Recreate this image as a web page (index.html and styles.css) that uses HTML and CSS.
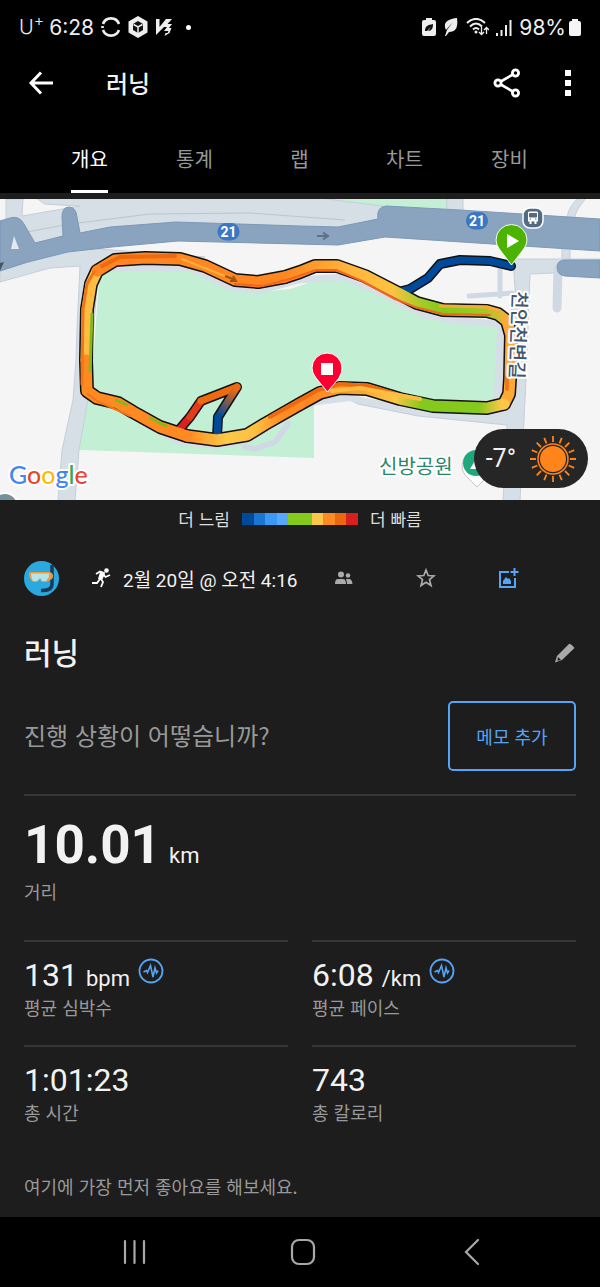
FILE: index.html
```
<!DOCTYPE html>
<html lang="ko">
<head>
    <meta charset="UTF-8">
    <meta name="viewport" content="width=device-width, initial-scale=1.0">
    <title>러닝</title>
    <link rel="stylesheet" href="styles.css">
</head>
<body>
    <header class="top">
        <div class="status-bar">
            <div class="status-left">
                <span class="carrier">U<sup>+</sup></span>
                <span>6:28</span>
                <svg width="20" height="20" viewBox="0 0 20 20"><path d="M2 7A8.500 8.500 0 0 1 18 7M2 13A8.500 8.500 0 0 0 18 13M1.500 11V9" fill="none" stroke="#eee" stroke-width="2.600"/></svg>
                <svg width="20" height="22" viewBox="0 0 20 22"><path d="M10 0l9.500 5.500v11L10 22 .5 16.500v-11z" fill="#eee"/><path d="M10 5l5 3v6l-5 3-5-3V8z" fill="#111"/><path d="M5.500 8.500L10 11l4.500-2.500M10 11v6" fill="none" stroke="#eee" stroke-width="1.500"/></svg>
                <svg width="18" height="18" viewBox="0 0 18 18"><path d="M1 1h3.500v8L11 1h6l-4.500 5H17l-3 4h2.500L14.500 15 9.500 18l1-3h2l1-2H9l3-4H9L1 17z" fill="#eee"/></svg>
                <span class="dot"></span>
            </div>
            <div class="status-right">
                <svg width="14" height="18" viewBox="0 0 14 18"><path d="M4 0h6v2h2a2 2 0 0 1 2 2v12a2 2 0 0 1-2 2H2a2 2 0 0 1-2-2V4a2 2 0 0 1 2-2h2z" fill="#eee"/><path d="M3 13c0-5 3-6 8-7 0 4-1 7-5 7l3-4-4 4z" fill="#111"/></svg>
                <svg width="16" height="18" viewBox="0 0 16 18"><path d="M14 0c1 8 0 14-8 14l-3 4H2l2-6 6-8-7 8C-1 4 6 1 14 0z" fill="#eee"/></svg>
                <svg width="23" height="18" viewBox="0 0 23 18"><path d="M1 5C6-.5 14-.5 19 5M4 8.500c4-4 8-4 12 0M7 11.500c2-2 4-2 6 0" fill="none" stroke="#eee" stroke-width="2"/><circle cx="10" cy="14" r="1.500" fill="#eee"/><path d="M15.500 9v7m-2.500-2l2.500 2.500L18 14M20.500 16v-6M18 12l2.500-2.500L23 12" fill="none" stroke="#eee" stroke-width="1.300"/></svg>
                <svg width="16" height="17" viewBox="0 0 16 17"><path d="M1 14v3M5.500 11v6M10 6v11M14.500 1v16" stroke="#eee" stroke-width="2"/></svg>
                <span class="battery-level">98%</span>
                <svg width="12" height="17" viewBox="0 0 12 17"><path d="M3 0h6v2h1a2 2 0 0 1 2 2v11a2 2 0 0 1-2 2H2a2 2 0 0 1-2-2V4a2 2 0 0 1 2-2h1z" fill="#f5f5f5"/></svg>
            </div>
        </div>

        <div class="app-bar">
            <button class="icon-btn" aria-label="뒤로">
                <svg width="26" height="24" viewBox="0 0 26 24"><path d="M13 1.500L3 12l10 10.500M3 12h22" fill="none" stroke="#fff" stroke-width="3"/></svg>
            </button>
            <h1>러닝</h1>
            <button class="icon-btn share" aria-label="공유">
                <svg width="28" height="30" viewBox="0 0 28 30"><path d="M5 15L22.500 5M5 15l17.500 10" stroke="#fff" stroke-width="2.600"/><g fill="#000" stroke="#fff" stroke-width="2.800"><circle cx="5" cy="15" r="3.100"/><circle cx="22.500" cy="5" r="3.100"/><circle cx="22.500" cy="25" r="3.100"/></g></svg>
            </button>
            <button class="icon-btn" aria-label="더보기">
                <svg width="6" height="28" viewBox="0 0 6 28"><path d="M0 1h6v6H0zM0 11h6v6H0zM0 21h6v6H0z" fill="#fff"/></svg>
            </button>
        </div>

        <nav class="tabs">
            <button class="tab active"><span>개요</span></button>
            <button class="tab"><span>통계</span></button>
            <button class="tab"><span>랩</span></button>
            <button class="tab"><span>차트</span></button>
            <button class="tab"><span>장비</span></button>
        </nav>
    </header>

    <main>
        <section class="map">
            <svg class="map-canvas" viewBox="0 0 600 301" role="img" aria-label="러닝 경로">
                <defs>
                    <linearGradient id="spur" gradientUnits="userSpaceOnUse" x1="238" y1="188" x2="219" y2="217">
                        <stop offset="0.100" stop-color="#ee6a10"/><stop offset="1" stop-color="#004a9c"/>
                    </linearGradient>
                    <linearGradient id="south" gradientUnits="userSpaceOnUse" x1="187" y1="0" x2="300" y2="0">
                        <stop offset="0" stop-color="#ff8a22"/><stop offset="0.350" stop-color="#fdc847"/><stop offset="0.600" stop-color="#fdc040"/><stop offset="0.850" stop-color="#ff8a22"/>
                    </linearGradient>
                    <linearGradient id="southeast" gradientUnits="userSpaceOnUse" x1="300" y1="0" x2="510" y2="0">
                        <stop offset="0" stop-color="#f98120"/><stop offset="0.300" stop-color="#fca631"/><stop offset="0.450" stop-color="#fcc746"/><stop offset="0.580" stop-color="#84c91b"/><stop offset="0.850" stop-color="#84c91b"/><stop offset="0.960" stop-color="#fcc746"/>
                    </linearGradient>
                    <linearGradient id="north" gradientUnits="userSpaceOnUse" x1="285" y1="0" x2="510" y2="0">
                        <stop offset="0" stop-color="#ff8620"/><stop offset="0.300" stop-color="#ffb73c"/><stop offset="0.480" stop-color="#fcc23f"/><stop offset="0.600" stop-color="#a6cc29"/><stop offset="0.700" stop-color="#84c91b"/><stop offset="0.880" stop-color="#9ccb25"/><stop offset="1" stop-color="#fdae38"/>
                    </linearGradient>
                </defs>
                <rect width="600" height="301" fill="#f5f5f5"/>

                <!-- parks -->
                <path d="M100 68L145 70 190 71 215 82 250 94 290 90 320 80 353 79 400 98 430 114 460 125 498 127 496 201 430 202 360 190 314 207V259L79 251 88 200 94 150z" fill="#c3f0d4"/>
                <path d="M320 0H447V11L383 7z" fill="#c3f0d4"/>

                <!-- side roads -->
                <g fill="#d6dee6" stroke="#c5cfda" stroke-width="1">
                    <path d="M6 0H23L22 17 80 7 60 6 45 5 36 -1H320L350 3 383 7 378 20 338 30 176 26 110 32 35 48 0 42V22H6z"/>
                    <path d="M0 83L50 69 80 67 77 130 76 161 73 201 62 251 58 302H75L79 251 88 200 98 75 118 56 205 58 100 50 68 50 0 70z"/>
                    <path d="M447 -1H463V16H446z"/>
                    <path d="M503 302L507 226 418 217 358 205 350 201 495 208 500 125 516 105 513 60 600 60V72L530 75 526 180 520 302z"/>
                    <path d="M578 -1C570 8 567 12 567 24H574C574 12 582 5 586 -1zM562 47H570V60H562z"/>
                </g>
                <path d="M0 38L70 25 150 15 250 14 345 21" fill="none" stroke="#b9c6cf"/>
                <g fill="none" stroke="#d6dee6" stroke-linecap="round" stroke-linejoin="round">
                    <path d="M98 69L190 69 230 88 257 92 298 81 345 78 385 96 425 116 460 122 501 125 497 201" stroke-width="7"/>
                    <path d="M95 194L118 199 138 221 180 243 215 247 245 243 280 222 310 204 350 199 420 212 490 216" stroke-width="6"/>
                    <path d="M245 248L255 250 275 243 288 225" stroke="#d0d9e3" stroke-width="6"/>
                    <path d="M500 66V97M469 97L512 94" stroke="#cfd9e3" stroke-width="5"/>
                    <path d="M558 70L557 109" stroke="#cfd9e3" stroke-width="9"/>
                </g>

                <!-- highway 21 -->
                <path d="M0 22L10 19Q19 16 24 25L35 44 63 37 62 18Q62 8 69 8 76 8 77 18L80 34 110 28 176 23 300 27 338 28 378 20Q376 8 386 7L460 11 600 20V52L385 38 338 46 178 42 112 48 68 53 28 63 0 72z" fill="#8aa3bf" stroke="#7c99b8"/>
                <path d="M11 50L14 37 19 50z" fill="#e3e9ed"/>
                <path d="M600 61H564Q557 62 557 68 557 76 565 77L600 79z" fill="#8aa3bf" stroke="#7c99b8"/>
                <path d="M0 64L4 63 0 72z" fill="#465563"/>
                <path d="M317 37H327M323 33.500L328 37 323 40.500" fill="none" stroke="#5e7287" stroke-width="2"/>
                <g class="road-sign">
                    <rect x="217.500" y="24" width="22" height="17.500" rx="8.500" fill="#3a77c5"/>
                    <text x="228.500" y="38" text-anchor="middle">21</text>
                    <rect x="466" y="13" width="22" height="17.500" rx="8.500" fill="#3a77c5"/>
                    <text x="477" y="27" text-anchor="middle">21</text>
                </g>
                <g>
                    <rect x="523" y="9" width="20" height="20" rx="7" fill="#536b80" stroke="#fff" stroke-width="1.500"/>
                    <path d="M529 12.500H537Q538 12.500 538 14V22.500H536.500V25H534.500V22.500H531.500V25H529.500V22.500H528V14Q528 12.500 529 12.500z" fill="#fff"/>
                    <path d="M529.500 14.500H536.500V18H529.500zM529.500 20H531M535 20H536.500" fill="#536b80" stroke="#536b80"/>
                </g>

                <!-- track outline -->
                <g fill="none" stroke="#111" stroke-linecap="round" stroke-linejoin="round">
                    <path d="M511 67L490 62 460 61 440 65 428 79 410 90 402 92M178 232L190 218 201 202 237 188 218 218 217 238" stroke-width="10"/>
                    <path d="M86 161L87 110 91 85 97 72 115 61 145 59 180 60 205 67 235 81 258 83 285 78 300 73 315 67 337 67 365 77 400 95 417 104 443 111 487 112 498 115 507 122 511 136 510 180 509 195 504 205 487 209 433 207 400 200 367 190 340 189 320 194 300 205 265 225 247 236 217 241 187 237 160 228 133 213 118 204 97 199 87 192z" stroke-width="14"/>
                </g>
                <!-- track, coloured by pace -->
                <g fill="none" stroke-linecap="round" stroke-linejoin="round">
                    <path d="M511 67L490 62 460 61 440 65 428 79 410 90 402 92" stroke="#004a9c" stroke-width="7"/>
                    <path d="M178 232L190 218" stroke="#d8201e" stroke-width="7"/>
                    <path d="M190 218L201 202" stroke="#e33b1b" stroke-width="7"/>
                    <path d="M201 202L237 188" stroke="#ee6a10" stroke-width="7"/>
                    <path d="M237 188L218 218" stroke="url(#spur)" stroke-width="7"/>
                    <path d="M218 218L217 238" stroke="#004a9c" stroke-width="7"/>
                    <path d="M86 161L87 110 91 85 97 72" stroke="#fdbd43" stroke-width="11"/>
                    <path d="M97 72L115 61 145 59 180 60 205 67 235 81 258 83 285 78" stroke="#ff8620" stroke-width="11"/>
                    <path d="M285 78L300 73 315 67 337 67 365 77 400 95 417 104 443 111 487 112 498 115 507 122" stroke="url(#north)" stroke-width="11"/>
                    <path d="M507 122L511 136 510 180 509 195 504 205" stroke="#fda936" stroke-width="11"/>
                    <path d="M504 205L487 209 433 207 400 200 367 190 340 189 320 194 300 205" stroke="url(#southeast)" stroke-width="11"/>
                    <path d="M300 205L265 225 247 236 217 241 187 237" stroke="url(#south)" stroke-width="11"/>
                    <path d="M187 237L160 228 133 213 118 204 97 199 87 192 86 161" stroke="#ff8a22" stroke-width="11"/>
                    <!-- second lap -->
                    <path d="M82 185L83 110 87 85 94 73" stroke="#f27618" stroke-width="3"/>
                    <path d="M90 172L92 115" stroke="#84b91b" stroke-width="3"/>
                    <path d="M102 67L120 58 175 57" stroke="#ee6a10" stroke-width="4"/>
                    <path d="M182 60L230 79" stroke="#fdb13c" stroke-width="2"/>
                    <path d="M235 85L262 87 290 80 316 71 336 71 362 82 395 100 415 108 443 115 490 116" stroke="#f1661c" stroke-width="2"/>
                    <path d="M440 107L487 108 500 112" stroke="#fba834" stroke-width="3"/>
                    <path d="M270 218L318 191 340 185 368 187 395 195" stroke="#ee6a10" stroke-width="4"/>
                    <path d="M332 192L360 189 420 200" stroke="#fdbd43" stroke-width="4"/>
                    <path d="M88 195L97 202 130 217" stroke="#f27618" stroke-width="2"/>
                    <path d="M116 201L127 206M150 219L166 227" stroke="#84b91b" stroke-width="3"/>
                    <path d="M507 178V190" stroke="#f27618" stroke-width="4"/>
                </g>
                <path d="M225 77L235 81M230 82L236 82 233 77" fill="none" stroke="#9a5512" stroke-width="2"/>

                <!-- start and finish pins -->
                <path d="M511.500 66L500 51Q496 46 496 41A15.500 15.500 0 0 1 527 41Q527 46 523 51z" fill="#4cb400" stroke="#f5fff0"/>
                <path d="M507 35L519 42 507 49z" fill="#fff"/>
                <path d="M327.500 193L316 179Q312 174 312 169A15 15 0 0 1 342 169Q342 174 339 179z" fill="#fb0030" stroke="#fff"/>
                <rect x="321" y="164" width="12" height="12" fill="#fff"/>

                <text class="street" transform="translate(513 92) rotate(92)">천안천변길</text>
                <text class="park" x="379" y="275">신방공원</text>
                <path d="M477 288L465 276A15 15 0 1 1 489 276z" fill="#fff" stroke="#c6c6c6"/>
                <circle cx="476" cy="264" r="13" fill="#20a77c"/>
                <path d="M476 260L482 270H470z" fill="#fff"/>
                <circle cx="5" cy="307" r="13" fill="#78909c" stroke="#fff" stroke-width="2"/>
                <text class="google" x="9" y="285"><tspan fill="#4285f4">G</tspan><tspan fill="#ea4335">o</tspan><tspan fill="#fbbc05">o</tspan><tspan fill="#4285f4">g</tspan><tspan fill="#34a853">l</tspan><tspan fill="#ea4335">e</tspan></text>
            </svg>
            <div class="weather">
                <span>-7°</span>
                <svg width="46" height="46" viewBox="-23 -23 46 46"><circle r="13" fill="#ff851b"/><circle r="15" fill="none" stroke="#ff851b" stroke-width="1.500"/><path d="M0-17V-23M0 17V23M17 0H23M-17 0H-23M6.500-15.700L8.800-21.200M-6.500-15.700L-8.800-21.200M6.500 15.700L8.800 21.200M-6.500 15.700L-8.800 21.200M15.700-6.500L21.200-8.800M-15.700-6.500L-21.200-8.800M15.700 6.500L21.200 8.800M-15.700 6.500L-21.200 8.800M12 12L16.300 16.300M-12 12L-16.300 16.300M12-12L16.300-16.300M-12-12L-16.300-16.300" stroke="#ff851b" stroke-width="1.800"/></svg>
            </div>
        </section>

        <div class="legend">
            <span>더 느림</span>
            <div class="scale">
                <i class="pace-1"></i><i class="pace-2"></i><i class="pace-3"></i><i class="pace-4"></i><i class="pace-5"></i><i class="pace-5"></i><i class="pace-6"></i><i class="pace-7"></i><i class="pace-8"></i><i class="pace-9"></i>
            </div>
            <span>더 빠름</span>
        </div>

        <div class="meta">
            <svg width="35" height="35" viewBox="0 0 35 35"><circle cx="17.500" cy="17.500" r="17.500" fill="#2aa9e0"/><path d="M28 4V23Q28 30 17 29.500" fill="none" stroke="#173a5e" stroke-width="3.500"/><path d="M5 12Q5 11 7 11H26Q29 12 29 15T26 19L23 21H18L16 18 13 21H9Q5 18 5 12z" fill="#f09a3e"/><path d="M7 12.500H25V16L22 20H18L16 17 13 20H9Q7 17 7 12.500z" fill="#b5e4e8"/></svg>
            <svg class="runner" width="20" height="20" viewBox="0 0 20 20"><circle cx="15.500" cy="2.500" r="2.300" fill="#fff"/><path d="M5 6L9 3.500 13 5 10 11 12 14 10 19M12 6L14.500 9 19 7M9 11L6 15H1" fill="none" stroke="#fff" stroke-width="1.800"/><path d="M9 4L14 6 11 12 7 11z" fill="#fff"/></svg>
            <span class="date">2월 20일 @ 오전 4:16</span>
            <div class="actions">
                <button aria-label="공개 범위"><svg width="18" height="14" viewBox="0 0 18 14"><g fill="#aaa"><circle cx="6" cy="3.500" r="3"/><circle cx="13" cy="4.500" r="2.300"/><path d="M0 13Q0 8 3 8H8Q11 8 11 13zM12 13Q12 10 11 8H14Q17 8 17.500 13z"/></g></svg></button>
                <button aria-label="즐겨찾기"><svg width="20" height="20" viewBox="0 0 20 20"><path d="M10 2L12.200 7.500 18 7.900 13.500 11.600 15 17.500 10 14.300 5 17.500 6.500 11.600 2 7.900 7.800 7.500z" fill="none" stroke="#aaa" stroke-width="1.700"/></svg></button>
                <button aria-label="사진 추가"><svg width="21" height="21" viewBox="0 0 21 21"><path d="M11 4H2V19H17V10M16.500 0V8M12.500 4H20.500" fill="none" stroke="#55a4f5" stroke-width="2"/><path d="M5 16V13L8 9 10 11 11 10 13 13V16z" fill="#55a4f5"/></svg></button>
            </div>
        </div>

        <div class="title-row">
            <h2>러닝</h2>
            <button aria-label="이름 편집"><svg width="22" height="22" viewBox="0 0 22 22"><path d="M1 20.500L3 14 15 2Q16 1 20.500 6L8 18z" fill="#aaa"/><path d="M4 15L7 18 3.500 18.800z" fill="#1d1d1d"/></svg></button>
        </div>

        <div class="note-row">
            <p>진행 상황이 어떻습니까?</p>
            <button class="note-btn">메모 추가</button>
        </div>

        <section class="distance">
            <div class="value"><strong>10.01</strong><span class="unit">km</span></div>
            <div class="label">거리</div>
        </section>

        <section class="stats">
            <div class="stat">
                <div class="value">131<span class="unit">bpm</span><svg class="pulse" width="26" height="26" viewBox="0 0 26 26"><circle cx="13" cy="13" r="11.500" fill="none" stroke="#55a4f5" stroke-width="1.800"/><path d="M5.500 14L8.500 12.500 9.500 14.500 12.500 7.500 15 19 17 10 18.500 15 20 12.500" fill="none" stroke="#55a4f5" stroke-width="1.600"/></svg></div>
                <div class="label">평균 심박수</div>
            </div>
            <div class="stat">
                <div class="value">6:08<span class="unit">/km</span><svg class="pulse" width="26" height="26" viewBox="0 0 26 26"><circle cx="13" cy="13" r="11.500" fill="none" stroke="#55a4f5" stroke-width="1.800"/><path d="M5.500 14L8.500 12.500 9.500 14.500 12.500 7.500 15 19 17 10 18.500 15 20 12.500" fill="none" stroke="#55a4f5" stroke-width="1.600"/></svg></div>
                <div class="label">평균 페이스</div>
            </div>
            <div class="stat">
                <div class="value">1:01:23</div>
                <div class="label">총 시간</div>
            </div>
            <div class="stat">
                <div class="value">743</div>
                <div class="label">총 칼로리</div>
            </div>
        </section>

        <p class="likes">여기에 가장 먼저 좋아요를 해보세요.</p>
    </main>

    <nav class="system-nav">
        <button aria-label="최근 앱"><svg width="24" height="26" viewBox="0 0 24 26"><path d="M2 2V24M11.500 2V24M21 2V24" stroke="#a8a8a8" stroke-width="2.200" stroke-linecap="round"/></svg></button>
        <button aria-label="홈"><svg width="26" height="28" viewBox="0 0 26 28"><rect x="2" y="2" width="22" height="24" rx="7" fill="none" stroke="#a8a8a8" stroke-width="2.200"/></svg></button>
        <button aria-label="뒤로"><svg width="16" height="28" viewBox="0 0 16 28"><path d="M14 2L2 14 14 26" fill="none" stroke="#a8a8a8" stroke-width="2.200" stroke-linecap="round"/></svg></button>
    </nav>
</body>
</html>
```

FILE: styles.css
```
:root {
    --bg: #1d1d1d;
    --text: #f2f2f2;
    --muted: #999999;
    --line: #363636;
    --blue: #55a4f5;
    --korean: "Noto Sans CJK KR", sans-serif;
}

* {
    box-sizing: border-box;
}

body {
    margin: 0;
    min-height: 100vh;
    display: flex;
    flex-direction: column;
    background: var(--bg);
    color: var(--text);
    font-family: Roboto, "Noto Sans CJK KR", sans-serif;
}

h1, h2, p {
    margin: 0;
}

h1, h2, p, .label, .legend {
    font-family: var(--korean);
}

button {
    background: none;
    border: none;
    padding: 0;
    color: inherit;
    font-family: var(--korean);
    cursor: pointer;
}

svg {
    display: block;
    flex: none;
}

.top {
    background: #000;
}

/* Status bar */
.status-bar {
    height: 54px;
    padding: 0 19px;
    display: flex;
    justify-content: space-between;
    align-items: center;
    font-family: Inter, sans-serif;
    font-size: 21px;
    color: #eee;
}

.status-left,
.status-right {
    display: flex;
    align-items: center;
    gap: 7px;
}

.carrier {
    margin-right: -2px;
    font-size: 20px;
    font-weight: 300;
}

.carrier sup {
    font-size: 16px;
    line-height: 0;
}

.dot {
    width: 5px;
    height: 5px;
    margin-left: 6px;
    border-radius: 50%;
    background: #fff;
}

.battery-level {
    margin-right: -4px;
}

/* App bar */
.app-bar {
    height: 58px;
    padding: 0 29px 0 28px;
    display: flex;
    align-items: center;
}

.app-bar h1 {
    margin-left: 52px;
    font-size: 24px;
    font-weight: 500;
    line-height: 34px;
}

.share {
    margin-left: auto;
    margin-right: 44px;
}

.tabs {
    display: flex;
    height: 81px;
    padding: 0 38px 0 37px;
}

.tab {
    flex: 1;
    display: flex;
    justify-content: center;
    font-size: 20px;
    line-height: 28px;
    color: var(--muted);
}

.tab span {
    height: 100%;
    padding-top: 33px;
    border-bottom: 3px solid transparent;
}

.tab.active span {
    color: #fff;
    border-color: #fff;
}

/* Map */
.map {
    position: relative;
    margin-top: 6px;
}

.map-canvas {
    width: 100%;
    height: auto;
}

.road-sign text {
    font-size: 14px;
    font-weight: 700;
    fill: #fff;
}

.street,
.park,
.google {
    stroke: #fff;
    stroke-width: 4px;
    stroke-linejoin: round;
    paint-order: stroke;
}

.street {
    font-size: 19px;
    font-weight: 500;
    fill: #44566c;
}

.park {
    font-size: 20px;
    fill: #28876a;
}

.google {
    font-family: Lato, sans-serif;
    font-size: 25px;
    font-weight: 500;
}

.weather {
    position: absolute;
    right: 12px;
    bottom: 12px;
    height: 59px;
    padding: 0 12px;
    display: flex;
    align-items: center;
    gap: 14px;
    border-radius: 30px;
    background: #262626;
    font-size: 25px;
}

/* Pace legend */
.legend {
    height: 38px;
    display: flex;
    align-items: center;
    justify-content: center;
    gap: 12px;
    font-size: 17px;
    color: #ddd;
}

.legend span {
    padding-bottom: 2px;
}

.scale {
    display: flex;
    width: 116px;
    height: 12px;
}

.scale i {
    flex: 1;
}

.pace-1 { background: #004a9c; }
.pace-2 { background: #1976d2; }
.pace-3 { background: #3d97f5; }
.pace-4 { background: #55a8fd; }
.pace-5 { background: #84c91b; }
.pace-6 { background: #fdc847; }
.pace-7 { background: #fd8a24; }
.pace-8 { background: #ea690f; }
.pace-9 { background: #d8201e; }

/* Activity info */
.meta {
    height: 80px;
    padding: 0 51px 0 24px;
    display: flex;
    align-items: center;
}

.runner {
    margin-left: 32px;
    margin-right: 12px;
}

.date {
    flex: 1;
    font-size: 19px;
}

.actions {
    display: flex;
}

.actions button {
    width: 82px;
    height: 40px;
    display: flex;
    align-items: center;
    justify-content: center;
}

.title-row {
    height: 70px;
    padding: 0 24px;
    display: flex;
    align-items: center;
    justify-content: space-between;
}

.title-row h2 {
    padding-bottom: 4px;
    font-size: 30px;
    font-weight: 500;
}

.note-row {
    margin: 0 24px;
    padding: 13px 0 23px;
    display: flex;
    align-items: center;
    justify-content: space-between;
    border-bottom: 2px solid var(--line);
}

.note-row p {
    padding-bottom: 4px;
    font-size: 24px;
    color: var(--muted);
}

.note-btn {
    width: 128px;
    height: 70px;
    border: 2px solid var(--blue);
    border-radius: 5px;
    font-size: 18px;
    color: var(--blue);
}

/* Numbers */
.value {
    display: flex;
    align-items: baseline;
    font-size: 32px;
    line-height: 38px;
}

.unit {
    margin-left: 8px;
    font-size: 22px;
    line-height: 28px;
}

.label {
    font-size: 18px;
    line-height: 26px;
    color: var(--muted);
}

.distance {
    height: 144px;
    padding: 16px 24px 0;
}

.distance strong {
    font-size: 53px;
    line-height: 66px;
}

.stats {
    padding: 0 24px;
    display: grid;
    grid-template-columns: 1fr 1fr;
    column-gap: 24px;
}

.stat {
    padding: 14px 0 25px;
    border-top: 2px solid var(--line);
}

.pulse {
    align-self: flex-start;
    margin-top: 2px;
    margin-left: 8px;
}

.likes {
    padding: 23px 24px 17px;
    font-size: 18px;
    line-height: 26px;
    color: var(--muted);
}

/* System navigation */
.system-nav {
    height: 70px;
    margin-top: auto;
    padding: 0 44px 0 51px;
    display: flex;
    background: #000;
}

.system-nav button {
    flex: 1;
    display: flex;
    align-items: center;
    justify-content: center;
}
```
